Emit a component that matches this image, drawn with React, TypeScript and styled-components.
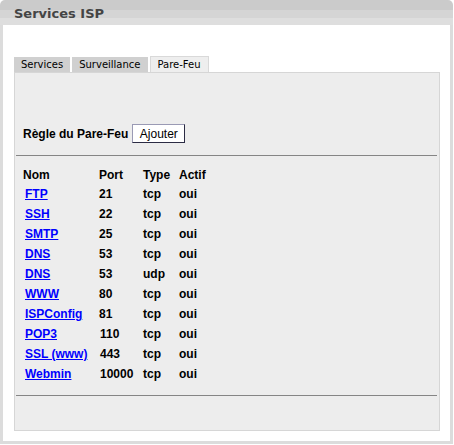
import React from "react";
import styled, { createGlobalStyle } from "styled-components";

const GlobalStyle = createGlobalStyle`
  html, body { margin: 0; padding: 0; background: #ffffff; }
  body { font-family: "Liberation Sans", Arial, sans-serif; }
`;

const Frame = styled.div`
  width: 453px;
`;

const Header = styled.div`
  height: 25px;
  box-sizing: border-box;
  border-radius: 5px 5px 0 0;
  background: linear-gradient(
    to bottom,
    #cbcbcb 0px,
    #cbcbcb 10px,
    #d5d5d5 10px,
    #d5d5d5 18px,
    #dedede 18px,
    #dedede 25px
  );
  padding: 2px 0 0 14px;
`;

const Title = styled.h1`
  margin: 0;
  font-family: "DejaVu Sans", Verdana, sans-serif;
  font-weight: bold;
  font-size: 13px;
  line-height: 24px;
  color: #454545;
`;

const Body = styled.div`
  border: 3px solid #dcdcdc;
  border-top: none;
  padding: 31px 10px 10px 11px;
`;

const Tabs = styled.div`
  display: flex;
  align-items: flex-end;
  gap: 2px;
  height: 16px;
`;

const Tab = styled.div<{ $active?: boolean }>`
  font-family: "DejaVu Sans", Verdana, sans-serif;
  font-size: 10px;
  line-height: 15px;
  height: 15px;
  padding: 0 7px;
  color: #000;
  background: ${(p) => (p.$active ? "#eeeeee" : "#d0d0d0")};
  border: ${(p) => (p.$active ? "1px solid #d9d9d9" : "none")};
  border-bottom: none;
`;

const Panel = styled.div`
  width: 426px;
  height: 359px;
  box-sizing: border-box;
  background: #ededed;
  border: 1px solid #d6d6d6;
  padding-top: 51px;
`;

const RuleRow = styled.div`
  display: flex;
  align-items: center;
  height: 19px;
  padding-left: 8px;
  gap: 4px;
`;

const Label = styled.span`
  font-weight: bold;
  font-size: 12px;
  color: #000;
`;

const Button = styled.button`
  height: 19px;
  width: 53px;
  padding: 0;
  margin: 0;
  background: #ffffff;
  border: 1px solid;
  border-color: #9a9ab4 #2c2c44 #2c2c44 #9a9ab4;
  font-family: "Liberation Sans", Arial, sans-serif;
  font-size: 12px;
  color: #000;
`;

const Divider = styled.div<{ $top: number }>`
  margin: ${(p) => p.$top}px 2px 0 1px;
  border-top: 1px solid #858585;
  height: 0;
`;

const Table = styled.div`
  margin-top: 11px;
  padding-left: 8px;
  display: grid;
  grid-template-columns: 76px 44px 36px auto;
  font-size: 12px;
  font-weight: bold;
  color: #000;
`;

const HeadCell = styled.div`
  line-height: 17px;
  height: 17px;
`;

const Cell = styled.div<{ $indent?: number }>`
  line-height: 20px;
  height: 20px;
  padding-left: ${(p) => p.$indent ?? 0}px;
`;

const Link = styled.a`
  color: #0000ff;
  text-decoration: underline;
`;

const rules: [string, string, string, string][] = [
  ["FTP", "21", "tcp", "oui"],
  ["SSH", "22", "tcp", "oui"],
  ["SMTP", "25", "tcp", "oui"],
  ["DNS", "53", "tcp", "oui"],
  ["DNS", "53", "udp", "oui"],
  ["WWW", "80", "tcp", "oui"],
  ["ISPConfig", "81", "tcp", "oui"],
  ["POP3", "110", "tcp", "oui"],
  ["SSL (www)", "443", "tcp", "oui"],
  ["Webmin", "10000", "tcp", "oui"],
];

export default function App() {
  return (
    <>
      <GlobalStyle />
      <Frame>
        <Header>
          <Title>Services ISP</Title>
        </Header>
        <Body>
          <Tabs>
            <Tab>Services</Tab>
            <Tab>Surveillance</Tab>
            <Tab $active>Pare-Feu</Tab>
          </Tabs>
          <Panel>
            <RuleRow>
              <Label>Règle du Pare-Feu</Label>
              <Button>Ajouter</Button>
            </RuleRow>
            <Divider $top={12} />
            <Table>
              <HeadCell>Nom</HeadCell>
              <HeadCell>Port</HeadCell>
              <HeadCell>Type</HeadCell>
              <HeadCell>Actif</HeadCell>
              {rules.map(([name, port, type, active], i) => (
                <React.Fragment key={i}>
                  <Cell $indent={2}>
                    <Link href="#">{name}</Link>
                  </Cell>
                  <Cell $indent={port.length > 2 ? 1 : 0}>{port}</Cell>
                  <Cell>{type}</Cell>
                  <Cell>{active}</Cell>
                </React.Fragment>
              ))}
            </Table>
            <Divider $top={11} />
          </Panel>
        </Body>
      </Frame>
    </>
  );
}
